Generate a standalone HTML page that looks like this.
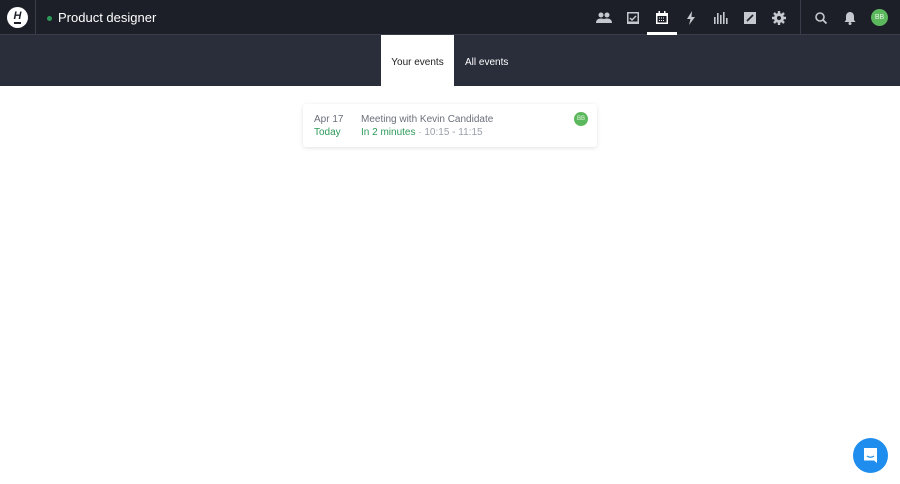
<!DOCTYPE html>
<html><head><meta charset="utf-8"><style>
*{margin:0;padding:0;box-sizing:border-box}
body{width:900px;height:484px;background:#fff;font-family:"Liberation Sans",sans-serif;position:relative;overflow:hidden}
.top{position:absolute;left:0;top:0;width:900px;height:35px;background:#1d1f28;border-bottom:1px solid #3a3d4a}
.logo{position:absolute;left:7px;top:7px;width:21px;height:21px;border-radius:50%;background:#fff;color:#1d1f28;font-weight:bold;font-style:italic;font-size:11px;text-align:center;line-height:18px}
.logo:after{content:"";position:absolute;left:7px;top:15px;width:7px;height:1.5px;background:#1d1f28}
.sep{position:absolute;left:35px;top:0;width:1px;height:35px;background:#3a3d4a}
.sep2{left:800px}
.dot{position:absolute;left:47px;top:16px;width:5px;height:5px;border-radius:50%;background:#2e9a5a}
.title{position:absolute;left:58px;top:10px;color:#fff;font-size:13px}
.ic{position:absolute;top:10px;width:16px;height:16px}
.ul{position:absolute;left:647px;top:32px;width:30px;height:3px;background:#fff}
.av{position:absolute;left:871px;top:9px;width:17px;height:17px;border-radius:50%;background:#5cb85c;color:#e8f5e8;font-size:7px;text-align:center;line-height:17px}
.sub{position:absolute;left:0;top:35px;width:900px;height:51px;background:#2a2d3a}
.tab1{position:absolute;left:381px;top:35px;width:73px;height:51px;background:#fff;color:#222;font-size:10px;text-align:center;line-height:51px;padding-top:0}
.tab1 span,.tab2 span{position:relative;top:2px}
.tab2{position:absolute;left:465px;top:35px;color:#fff;font-size:10px;line-height:51px}
.card{position:absolute;left:303px;top:104px;width:294px;height:43px;background:#fff;border-radius:3px;box-shadow:0 1px 4px rgba(0,0,0,.12)}
.d1{position:absolute;left:11px;top:10px;font-size:10px;color:#6b6f7a}
.d2{position:absolute;left:11px;top:23px;font-size:10px;color:#2e9a5a}
.m1{position:absolute;left:58px;top:10px;font-size:10px;color:#6b6f7a}
.m2{position:absolute;left:58px;top:23px;font-size:10px;color:#2e9a5a}
.m2 span{color:#9a9ea8}
.cav{position:absolute;left:271px;top:8px;width:14px;height:14px;border-radius:50%;background:#5cb85c;color:#e8f5e8;font-size:6px;text-align:center;line-height:14px}
.chat{position:absolute;left:853px;top:438px;width:35px;height:35px;border-radius:50%;background:#1f8ded}
</style></head><body>
<div class="top">
<div class="logo">H</div><div class="sep"></div>
<div class="dot"></div><div class="title">Product designer</div>
<svg class="ic" style="left:596px" viewBox="0 0 16 16" fill="#c6c8d0"><circle cx="5" cy="5" r="2.5"/><circle cx="11" cy="5" r="2.5"/><path d="M0 13c0-3 2-4.5 5-4.5s5 1.5 5 4.5zM9 13c0-2 0-3-1-4 1-.5 2-.5 3-.5 3 0 5 1.5 5 4.5z"/></svg>
<svg class="ic" style="left:625px" viewBox="0 0 16 16"><rect x="2" y="2" width="12" height="12" fill="#c6c8d0"/><rect x="3.5" y="3.5" width="9" height="8" fill="#1d1f28"/><path d="M5 8l2 2 4-4" stroke="#c6c8d0" stroke-width="1.5" fill="none"/></svg>
<svg class="ic" style="left:654px" viewBox="0 0 16 16"><rect x="2" y="3" width="12" height="11" fill="#fff"/><rect x="3.5" y="6" width="9" height="6.5" fill="#1d1f28"/><rect x="4.5" y="1" width="1.5" height="3" fill="#fff"/><rect x="10" y="1" width="1.5" height="3" fill="#fff"/><path d="M5 8h6M5 10.5h6" stroke="#fff" stroke-width="1" stroke-dasharray="1 1"/></svg>
<svg class="ic" style="left:683px" viewBox="0 0 16 16" fill="#c6c8d0"><path d="M9 1L4 9h3.5L6 15l6-8H8.5z"/></svg>
<svg class="ic" style="left:712px" viewBox="0 0 16 16" fill="#c6c8d0"><rect x="2" y="7" width="1.6" height="7"/><rect x="5" y="3" width="1.6" height="11"/><rect x="8" y="5" width="1.6" height="9"/><rect x="11" y="2" width="1.6" height="12"/><rect x="14" y="8" width="1.6" height="6"/></svg>
<svg class="ic" style="left:742px" viewBox="0 0 16 16"><rect x="2" y="2" width="12" height="12" fill="#c6c8d0"/><path d="M5 11l6-6" stroke="#1d1f28" stroke-width="1.6"/></svg>
<svg class="ic" style="left:771px" viewBox="0 0 16 16"><circle cx="8" cy="8" r="5" fill="#c6c8d0"/><path d="M8 1v14M1 8h14M3 3l10 10M13 3L3 13" stroke="#c6c8d0" stroke-width="2.4"/><circle cx="8" cy="8" r="2" fill="#1d1f28"/></svg>
<div class="sep sep2"></div>
<svg class="ic" style="left:813px" viewBox="0 0 16 16"><circle cx="7" cy="7" r="4" stroke="#c6c8d0" stroke-width="1.6" fill="none"/><path d="M10 10l3.5 3.5" stroke="#c6c8d0" stroke-width="1.8"/></svg>
<svg class="ic" style="left:842px" viewBox="0 0 16 16" fill="#c6c8d0"><path d="M8 2c-2.5 0-4 2-4 4.5V10l-1.5 2h11L12 10V6.5C12 4 10.5 2 8 2z"/><circle cx="8" cy="13.5" r="1.5"/></svg>
<div class="ul"></div>
<div class="av">BB</div>
</div>
<div class="sub"></div>
<div class="tab1"><span>Your events</span></div>
<div class="tab2"><span>All events</span></div>
<div class="card">
<div class="d1">Apr 17</div><div class="d2">Today</div>
<div class="m1">Meeting with Kevin Candidate</div>
<div class="m2">In 2 minutes <span>· 10:15 - 11:15</span></div>
<div class="cav">BB</div>
</div>
<div class="chat"><svg width="35" height="35" viewBox="0 0 35 35"><path d="M11 10h13v15l-3-2.5H11z" fill="#fff"/><path d="M14 18q3.5 2.5 7 0" stroke="#1f8ded" stroke-width="1.3" fill="none"/></svg></div>
</body></html>
